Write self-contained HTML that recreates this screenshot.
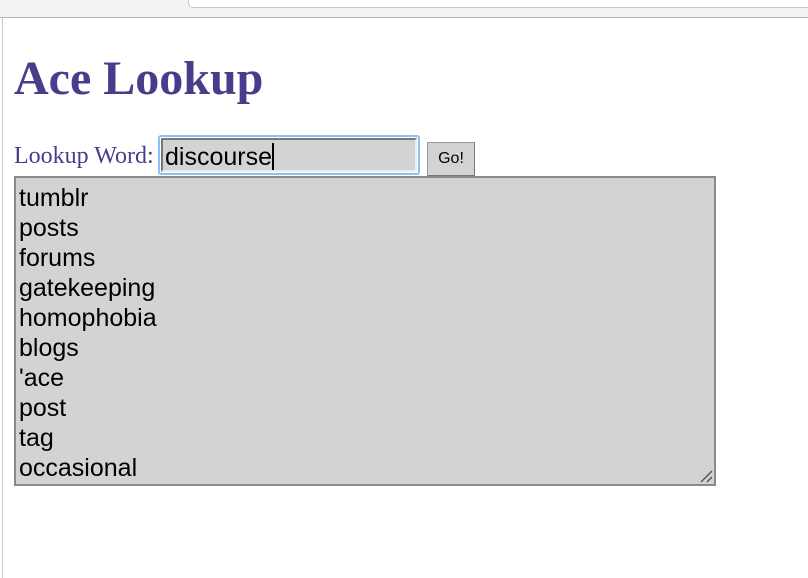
<!DOCTYPE html>
<html><head><style>
html,body{margin:0;padding:0;background:#fff;width:808px;height:578px;overflow:hidden;position:relative}
.chrome{position:absolute;left:0;top:0;width:808px;height:17px;background:#f2f2f2;border-bottom:1px solid #b8b8b8}
.url{position:absolute;left:188px;top:-6px;width:640px;height:12px;background:#fff;border:1px solid #c8c8c8;border-radius:5px}
.lline{position:absolute;left:2px;top:18px;width:1px;height:560px;background:#c8c8c8}
h1{position:absolute;left:14px;top:51px;margin:0;font:bold 48px "Liberation Serif",serif;color:#483d8b;line-height:56px}
.lbl{position:absolute;left:14px;top:142px;font:24px "Liberation Serif",serif;color:#483d8b;line-height:28px;white-space:nowrap}
.inp{position:absolute;left:158px;top:135px;width:258px;height:36px;border:2px solid #8fbff5;border-radius:3px;}
.inp div{position:absolute;left:1px;top:1px;width:250px;height:30px;background:#d3d3d3;border:2px solid #777;border-right-color:#eee;border-bottom-color:#eee;font:25px "Liberation Sans",sans-serif;line-height:34px;padding-left:2px;color:#000;white-space:nowrap;overflow:hidden}
.caret{display:inline-block;width:2px;height:28px;background:#000;vertical-align:-6px}
.go{position:absolute;left:427px;top:142px;width:46px;height:32px;background:#d3d3d3;border:1px solid #999;border-right-color:#777;border-bottom-color:#777;font:16px "Liberation Sans",sans-serif;line-height:32px;text-align:center;color:#000}
.ta{position:absolute;left:14px;top:176px;width:698px;height:306px;background:#d3d3d3;border:2px solid #8a8a8a;font:25px "Liberation Sans",sans-serif;line-height:30px;color:#000;padding:0}
.ta div{padding-left:3px;margin-top:5px}
</style></head><body>
<div class="chrome"><div class="url"></div></div>
<div class="lline"></div>
<h1>Ace Lookup</h1>
<div class="lbl">Lookup Word:</div>
<div class="inp"><div>discourse<span class="caret"></span></div></div>
<div class="go">Go!</div>
<div class="ta"><div>tumblr<br>posts<br>forums<br>gatekeeping<br>homophobia<br>blogs<br>'ace<br>post<br>tag<br>occasional</div>
<svg style="position:absolute;right:1px;bottom:1px" width="14" height="14"><path d="M2 13L13 2M8 13L13 8" stroke="#555" stroke-width="1.5"/></svg>
</div>
</body></html>
